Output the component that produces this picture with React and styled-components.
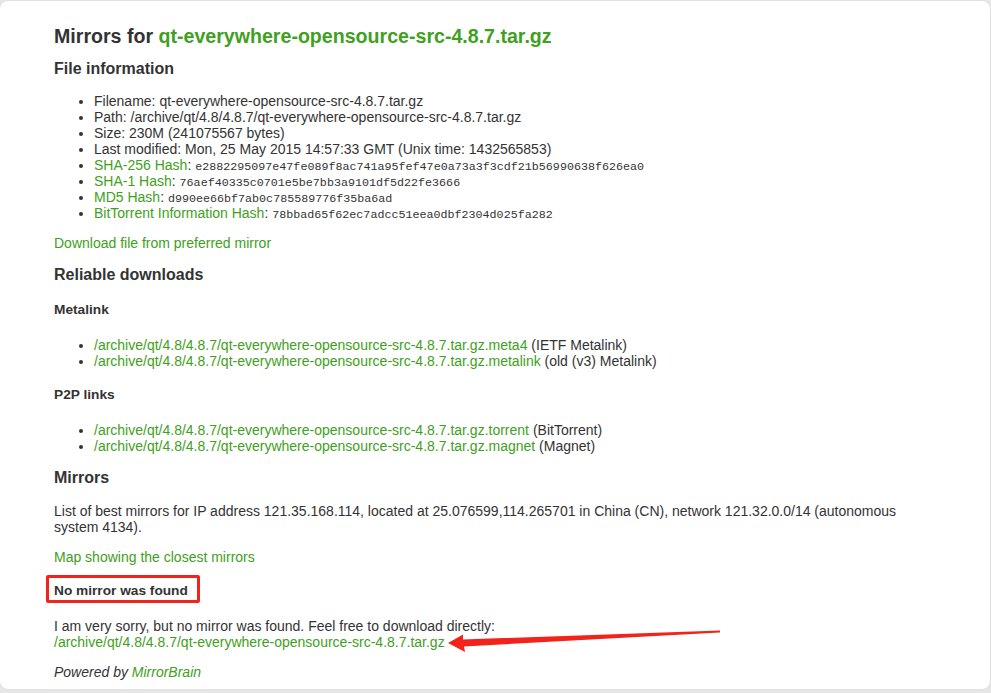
import React from 'react';
import styled, { createGlobalStyle } from 'styled-components';

const FILE = 'qt-everywhere-opensource-src-4.8.7.tar.gz';
const PATH = '/archive/qt/4.8/4.8.7/' + FILE;

const fileInfo = [
  { label: 'Filename', value: FILE },
  { label: 'Path', value: PATH },
  { label: 'Size', value: '230M (241075567 bytes)' },
  { label: 'Last modified', value: 'Mon, 25 May 2015 14:57:33 GMT (Unix time: 1432565853)' },
];

const hashes = [
  { label: 'SHA-256 Hash', value: 'e2882295097e47fe089f8ac741a95fef47e0a73a3f3cdf21b56990638f626ea0' },
  { label: 'SHA-1 Hash', value: '76aef40335c0701e5be7bb3a9101df5d22fe3666' },
  { label: 'MD5 Hash', value: 'd990ee66bf7ab0c785589776f35ba6ad' },
  { label: 'BitTorrent Information Hash', value: '78bbad65f62ec7adcc51eea0dbf2304d025fa282' },
];

const GlobalStyle = createGlobalStyle`
  html, body {
    margin: 0;
    padding: 0;
    background: #e6e6e6;
  }
  body {
    font-family: "Liberation Sans", Arial, sans-serif;
    color: #333;
  }
`;

const Page = styled.div`
  position: relative;
  width: 991px;
  height: 693px;
  padding-top: 1px;
  box-sizing: border-box;
`;

const Card = styled.main`
  background: #fff;
  border-radius: 8px;
  width: 990px;
  box-sizing: border-box;
  padding: 23px 54px 9px 54px;
  box-shadow: 0 0 2px rgba(0, 0, 0, 0.08);
`;

const Title = styled.h1`
  margin: 0;
  font-size: 19.6px;
  line-height: 24px;
  font-weight: bold;
`;

const Heading = styled.h2`
  margin: ${(p) => p.$top || 14}px 0 0;
  font-size: 16px;
  line-height: 20px;
  font-weight: bold;
`;

const SubHeading = styled.h3`
  margin: ${(p) => p.$top || 17}px 0 0;
  font-size: 13.7px;
  line-height: 16px;
  font-weight: bold;
`;

const Boxed = styled.h3`
  display: inline-block;
  margin: 10px 0 0 -8px;
  padding: 5px 9px 1px 5px;
  border: 3px solid #f2231b;
  border-radius: 2px;
  font-size: 13.7px;
  line-height: 16px;
  font-weight: bold;
`;

const List = styled.ul`
  margin: ${(p) => p.$top || 14}px 0 0;
  padding-left: 40px;
  font-size: 14px;
  line-height: 16px;
`;

const Item = styled.li`
  list-style: disc;
  height: 16px;
`;

const Link = styled.a`
  color: #41a021;
  text-decoration: none;
`;

const Hash = styled.span`
  font-family: "Liberation Mono", "Courier New", monospace;
  font-size: 11.7px;
  line-height: 1;
`;

const Para = styled.p`
  margin: ${(p) => p.$top || 14}px 0 0;
  font-size: 14px;
  line-height: 16px;
`;

const Footer = styled.p`
  margin: 14px 0 0;
  font-size: 14px;
  line-height: 16px;
  font-style: italic;
`;

const Arrow = styled.svg`
  position: absolute;
  left: 0;
  top: 0;
  pointer-events: none;
`;

export default function App() {
  return (
    <Page>
      <GlobalStyle />
      <Card>
        <Title>
          Mirrors for <Link href="#">{FILE}</Link>
        </Title>

        <Heading $top={11}>File information</Heading>
        <List>
          {fileInfo.map((f) => (
            <Item key={f.label}>
              {f.label}: {f.value}
            </Item>
          ))}
          {hashes.map((h) => (
            <Item key={h.label}>
              <Link href="#">{h.label}</Link>: <Hash>{h.value}</Hash>
            </Item>
          ))}
        </List>

        <Para>
          <Link href="#">Download file from preferred mirror</Link>
        </Para>

        <Heading>Reliable downloads</Heading>
        <SubHeading>Metalink</SubHeading>
        <List $top={19}>
          <Item>
            <Link href="#">{PATH}.meta4</Link> (IETF Metalink)
          </Item>
          <Item>
            <Link href="#">{PATH}.metalink</Link> (old (v3) Metalink)
          </Item>
        </List>

        <SubHeading $top={18}>P2P links</SubHeading>
        <List $top={19}>
          <Item>
            <Link href="#">{PATH}.torrent</Link> (BitTorrent)
          </Item>
          <Item>
            <Link href="#">{PATH}.magnet</Link> (Magnet)
          </Item>
        </List>

        <Heading>Mirrors</Heading>
        <Para $top={15}>
          List of best mirrors for IP address 121.35.168.114, located at 25.076599,114.265701 in China (CN),
          network 121.32.0.0/14 (autonomous system 4134).
        </Para>
        <Para>
          <Link href="#">Map showing the closest mirrors</Link>
        </Para>

        <div>
          <Boxed>No mirror was found</Boxed>
        </div>
        <Para $top={15}>
          I am very sorry, but no mirror was found. Feel free to download directly:
          <br />
          <Link href="#">{PATH}</Link>
        </Para>

        <Footer>
          Powered by <Link href="#">MirrorBrain</Link>
        </Footer>
      </Card>

      <Arrow width="991" height="693" viewBox="0 0 991 693">
        <polygon
          points="448,643 463,634.5 463,639.5 720,630.5 720,632.5 464,646.5 465,652"
          fill="#f2231b"
        />
      </Arrow>
    </Page>
  );
}
